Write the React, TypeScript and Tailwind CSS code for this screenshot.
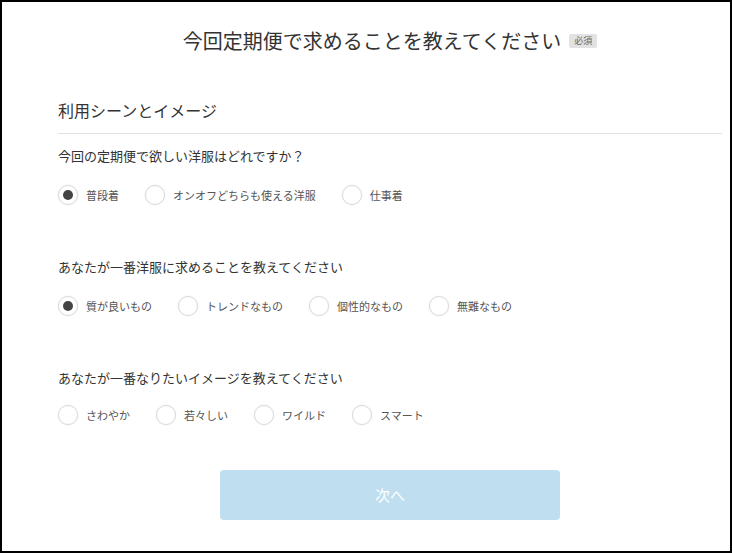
import { useState } from "react";

const font = { fontFamily: '"Noto Sans CJK JP", "Noto Sans", sans-serif' };

interface Question {
    id: string;
    label: string;
    options: string[];
}

const questions: Question[] = [
    {
        id: "scene",
        label: "今回の定期便で欲しい洋服はどれですか？",
        options: ["普段着", "オンオフどちらも使える洋服", "仕事着"],
    },
    {
        id: "value",
        label: "あなたが一番洋服に求めることを教えてください",
        options: ["質が良いもの", "トレンドなもの", "個性的なもの", "無難なもの"],
    },
    {
        id: "image",
        label: "あなたが一番なりたいイメージを教えてください",
        options: ["さわやか", "若々しい", "ワイルド", "スマート"],
    },
];

function Radio({ checked, label, onClick }: { checked: boolean; label: string; onClick: () => void }) {
    return (
        <button type="button" onClick={onClick} className="mr-[26px] flex items-center gap-2">
            <span className="flex h-5 w-5 items-center justify-center rounded-full border border-[#dadada] bg-white shadow-[0_0_2px_rgba(0,0,0,0.08)]">
                {checked && <span className="h-[10px] w-[10px] rounded-full bg-[#444]" />}
            </span>
            <span className="text-[11px] leading-none text-[#555]">{label}</span>
        </button>
    );
}

export default function App() {
    const [answers, setAnswers] = useState<Record<string, string>>({
        scene: "普段着",
        value: "質が良いもの",
    });

    return (
        <div style={font} className="box-border h-[553px] w-[732px] overflow-hidden border-2 border-black bg-white text-[#333]">
            <div className="flex justify-center pt-[25px] pl-[12px]">
                <div className="relative">
                    <h1 className="text-[20px] leading-[28px] text-[#333]">今回定期便で求めることを教えてください</h1>
                    <span className="absolute left-[calc(100%+8px)] top-[7px] whitespace-nowrap rounded-[2px] bg-[#e2e2e2] px-[5px] py-[2px] text-[9px] leading-[10px] text-[#666]">
                        必須
                    </span>
                </div>
            </div>

            <div className="mt-[45px] pl-[56px] pr-[8px]">
                <h2 className="text-[16px] leading-[20px] text-[#333]">利用シーンとイメージ</h2>
                <div className="mt-[13px] h-px w-full bg-[#e1e1e1]" />

                {questions.map((q, i) => (
                    <div key={q.id} className={i === 0 ? "mt-[13px]" : "mt-[53px]"}>
                        <p className="text-[13px] leading-[18px] text-[#333]">{q.label}</p>
                        <div className={i === 2 ? "mt-[18px] flex items-center" : "mt-[20px] flex items-center"}>
                            {q.options.map((opt) => (
                                <Radio
                                    key={opt}
                                    label={opt}
                                    checked={answers[q.id] === opt}
                                    onClick={() => setAnswers({ ...answers, [q.id]: opt })}
                                />
                            ))}
                        </div>
                    </div>
                ))}
            </div>

            <div className="mt-[45px] flex justify-center">
                <button type="button" className="ml-[48px] h-[50px] w-[340px] rounded-[4px] bg-[#bfdef0] text-[15px] text-white">
                    次へ
                </button>
            </div>
        </div>
    );
}
